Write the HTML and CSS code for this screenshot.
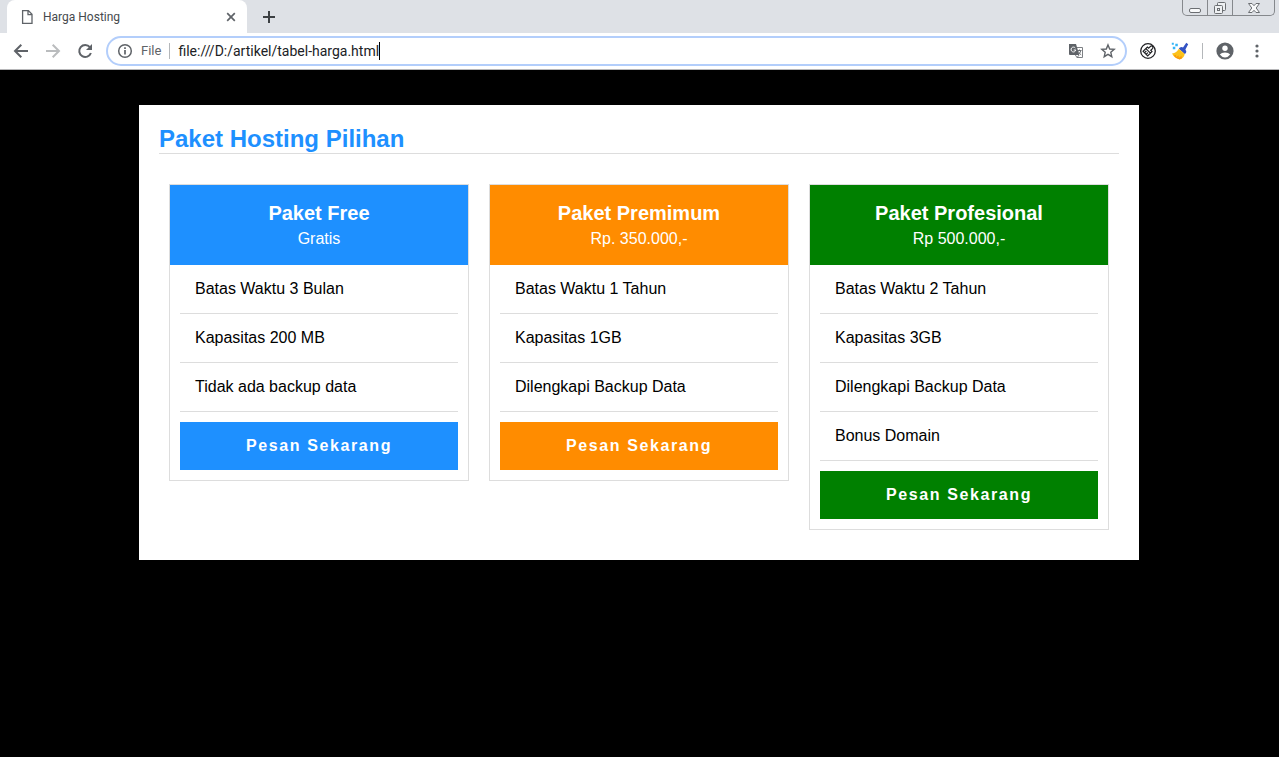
FILE: index.html
```html
<!DOCTYPE html>
<html lang="id">
<head>
<meta charset="utf-8">
<meta name="viewport" content="width=device-width, initial-scale=1">
<title>Harga Hosting</title>
<link rel="stylesheet" href="styles.css">
</head>
<body>
<header class="browser">
  <div class="tab-strip">
    <div class="tab">
      <svg class="tab-icon" width="16" height="16" viewBox="0 0 16 16" fill="none" stroke="#5f6368" stroke-width="1.3"><path d="M3.6 1.6H9.4L13 5.3V14.4H3.6ZM9 1.8V5.7H12.8"/></svg>
      <span class="tab-title">Harga Hosting</span>
      <button class="icon-button" type="button" aria-label="Close tab"><svg width="16" height="16" viewBox="0 0 16 16" stroke="#5f6368" stroke-width="1.7"><path d="M4.2 4.2 11.8 11.8M11.8 4.2 4.2 11.8"/></svg></button>
    </div>
    <button class="icon-button new-tab" type="button" aria-label="New tab"><svg width="16" height="16" viewBox="0 0 16 16" stroke="#3c4043" stroke-width="2"><path d="M8 2V14M2 8H14"/></svg></button>
    <div class="window-controls">
      <button class="window-button" type="button" aria-label="Minimize"><svg width="14" height="14" viewBox="0 0 14 14" fill="#f8f9fa" stroke="#6b6e72"><rect x="1.5" y="7.5" width="11" height="4" rx="1.5"/></svg></button>
      <button class="window-button" type="button" aria-label="Restore"><svg width="14" height="14" viewBox="0 0 14 14" fill="#eef0f2" stroke="#6b6e72"><rect x="4.5" y="1.5" width="8" height="8" rx="1"/><rect x="1.5" y="4.5" width="8" height="8" rx="1"/><rect x="4.5" y="7.5" width="2" height="2"/></svg></button>
      <button class="window-button window-close" type="button" aria-label="Close"><svg width="14" height="14" viewBox="0 0 14 14" fill="#f8f9fa" stroke="#6b6e72"><path d="M1.5 2.5H5L7 4.7 9 2.5H12.5L9.2 7 12.5 11.5H9L7 9.3 5 11.5H1.5L4.8 7Z"/></svg></button>
    </div>
  </div>
  <div class="toolbar">
    <nav class="nav-buttons">
      <button class="icon-button" type="button" aria-label="Back"><svg width="16" height="16" viewBox="0 0 16 16" fill="none" stroke="#5f6368" stroke-width="2"><path d="M15 8H2.5M8.3 1.7 2 8 8.3 14.3"/></svg></button>
      <button class="icon-button" type="button" aria-label="Forward"><svg width="16" height="16" viewBox="0 0 16 16" fill="none" stroke="#babcbe" stroke-width="2"><path d="M1 8H13.5M7.7 1.7 14 8 7.7 14.3"/></svg></button>
      <button class="icon-button" type="button" aria-label="Reload"><svg width="16" height="16" viewBox="0 0 16 16"><path d="M12.9 4.2A6 6 0 1 0 13.9 10" fill="none" stroke="#5f6368" stroke-width="2"/><path d="M15 1V7H9Z" fill="#5f6368"/></svg></button>
    </nav>
    <div class="omnibox">
      <svg width="16" height="16" viewBox="0 0 16 16" fill="none" stroke="#5f6368"><circle cx="8" cy="8" r="6.3" stroke-width="1.5"/><path d="M8 7V11.6M8 4.3V6" stroke-width="1.7"/></svg>
      <label class="scheme" for="address">File</label>
      <span class="scheme-divider"></span>
      <div class="address-field">
        <input class="address" id="address" type="text" value="file:///D:/artikel/tabel-harga.html" spellcheck="false">
        <span class="caret"></span>
      </div>
      <button class="icon-button" type="button" aria-label="Translate"><svg width="16" height="16" viewBox="0 0 16 16"><path d="M6 4.5H14.5V14.5H9L6 10Z" fill="#fff" stroke="#7d8084"/><path d="M1 1H8L11.3 12H2Q1 12 1 11Z" fill="#5f6368"/><path d="M7.3 5A2.4 2.4 0 1 0 7.8 7H5.7" fill="none" stroke="#fff"/><path d="M9.7 7.5H13.5M11.5 6.5V7.5M12.8 7.7Q12.3 10 10.5 11.2M10.4 8.5Q11.3 10.7 13.2 11.8M9 14.5 11.2 12" fill="none" stroke="#5f6368" stroke-width=".9"/></svg></button>
      <button class="icon-button" type="button" aria-label="Bookmark"><svg width="16" height="16" viewBox="0 0 16 16" fill="none" stroke="#5f6368" stroke-width="1.4"><path d="M8 1.9 9.7 6 14.2 6.4 10.8 9.3 11.8 13.7 8 11.3 4.2 13.7 5.2 9.3 1.8 6.4 6.3 6Z"/></svg></button>
    </div>
    <div class="extensions">
      <button class="icon-button clean-button" type="button" aria-label="Clean extension"><svg width="16" height="16" viewBox="0 0 16 16" fill="none" stroke="#202124" stroke-width="1.2"><circle cx="8" cy="8" r="7.3" stroke-width="1.3"/><path d="M8.7 5.2 10.6 3.3Q11.6 2.6 12.5 3.5T12.7 5.4L10.8 7.3 12 8.6 7.7 12.9 3.1 8.3 7.4 4ZM5.9 5.6 10.4 10.1M4.7 9.6 6.3 8M6.3 11.2 7.9 9.6"/></svg></button>
      <button class="icon-button" type="button" aria-label="Broom extension"><svg width="18" height="18" viewBox="0 0 18 18"><path d="M15.3.8 17.2 2.2 14.4 7.4Q15.9 9 15 11L13.7 12 7.8 6.8 8.8 5.6Q10.6 4.7 12 5.4Z" fill="#3453c4"/><path d="M7.8 6.8 13.7 12Q13 16.5 8.5 17.3 3.5 16.2 1 11.4 5.8 11 7.8 6.8Z" fill="#fcc21b"/><path d="M2.6 13.6 5.2 12.8 5 14.9 7.7 13.6 7.7 16 10.4 13.8 11 16.2Q9.8 17.3 8.5 17.5 4.8 16.5 2.6 13.6Z" fill="#fb9a0b"/><path d="M.8.8H2.8V2.8H.8ZM4.3 1.8H6.8V4.3H4.3ZM1.8 4.8H4.3V7.3H1.8Z" fill="#35b5f5"/></svg></button>
      <span class="toolbar-divider"></span>
      <button class="icon-button" type="button" aria-label="Profile"><svg width="18" height="18" viewBox="0 0 18 18"><circle cx="9" cy="9" r="8.6" fill="#5f6368"/><circle cx="9" cy="6.2" r="2.7" fill="#fff"/><path d="M3.8 12.6Q5.5 10.4 9 10.4T14.2 12.6Q12.2 15.4 9 15.4T3.8 12.6Z" fill="#fff"/></svg></button>
      <button class="icon-button menu-button" type="button" aria-label="Menu"><svg width="16" height="16" viewBox="0 0 16 16" fill="#5f6368"><circle cx="8" cy="3" r="1.6"/><circle cx="8" cy="8" r="1.6"/><circle cx="8" cy="13" r="1.6"/></svg></button>
    </div>
  </div>
</header>

<main class="page">
  <section class="container">
    <h1 class="heading">Paket Hosting Pilihan</h1>
    <div class="plans">
      <article class="plan plan-free">
        <header class="plan-header">
          <h2 class="plan-name">Paket Free</h2>
          <p class="plan-price">Gratis</p>
        </header>
        <div class="plan-body">
          <ul class="features">
            <li class="feature">Batas Waktu 3 Bulan</li>
            <li class="feature">Kapasitas 200 MB</li>
            <li class="feature">Tidak ada backup data</li>
          </ul>
          <a class="order" href="#">Pesan Sekarang</a>
        </div>
      </article>
      <article class="plan plan-premium">
        <header class="plan-header">
          <h2 class="plan-name">Paket Premimum</h2>
          <p class="plan-price">Rp. 350.000,-</p>
        </header>
        <div class="plan-body">
          <ul class="features">
            <li class="feature">Batas Waktu 1 Tahun</li>
            <li class="feature">Kapasitas 1GB</li>
            <li class="feature">Dilengkapi Backup Data</li>
          </ul>
          <a class="order" href="#">Pesan Sekarang</a>
        </div>
      </article>
      <article class="plan plan-professional">
        <header class="plan-header">
          <h2 class="plan-name">Paket Profesional</h2>
          <p class="plan-price">Rp 500.000,-</p>
        </header>
        <div class="plan-body">
          <ul class="features">
            <li class="feature">Batas Waktu 2 Tahun</li>
            <li class="feature">Kapasitas 3GB</li>
            <li class="feature">Dilengkapi Backup Data</li>
            <li class="feature">Bonus Domain</li>
          </ul>
          <a class="order" href="#">Pesan Sekarang</a>
        </div>
      </article>
    </div>
  </section>
</main>
</body>
</html>
```
FILE: styles.css
```css
* {
  box-sizing: border-box;
}

body {
  margin: 0;
  min-height: 100vh;
  display: flex;
  flex-direction: column;
  background: #000;
  color: #000;
  font: 16px/18px "Liberation Sans", Arial, sans-serif;
}

svg {
  display: block;
}

/* Browser window */

.browser {
  font-family: "Segoe UI", Roboto, sans-serif;
  font-size: 12px;
  border-bottom: 1px solid #b6b6b8;
  background: #fff;
}

.icon-button {
  display: flex;
  align-items: center;
  justify-content: center;
  padding: 0;
  border: 0;
  background: none;
}

.tab-strip {
  display: flex;
  align-items: center;
  height: 33px;
  padding-left: 7px;
  background: #dee1e6;
}

.tab {
  display: flex;
  align-items: center;
  align-self: stretch;
  gap: 8px;
  width: 240px;
  padding: 0 8px 0 12px;
  border-radius: 8px 8px 0 0;
  background: #fff;
}

.tab-title {
  flex: 1;
  color: #45494d;
}

.new-tab {
  margin-left: 14px;
}

.window-controls {
  display: flex;
  align-self: flex-start;
  margin: 0 4px 0 auto;
  border: 1px solid #85888c;
  border-top: 0;
  border-radius: 0 0 5px 5px;
}

.window-button {
  display: flex;
  align-items: center;
  justify-content: center;
  width: 25px;
  height: 15px;
  padding: 0;
  border: 0;
  border-right: 1px solid #85888c;
  background: none;
}

.window-close {
  width: 41px;
  border-right: 0;
}

.toolbar {
  display: flex;
  align-items: center;
  height: 36px;
  padding: 0 14px 0 13px;
}

.nav-buttons {
  display: flex;
  gap: 16px;
  margin-right: 13px;
}

.omnibox {
  flex: 1;
  display: flex;
  align-items: center;
  gap: 8px;
  height: 30px;
  padding: 0 9px;
  border: 2px solid #b3cefb;
  border-radius: 15px;
}

.omnibox .icon-button {
  margin-left: 8px;
}

.scheme {
  color: #5f6368;
  font-size: 13px;
}

.scheme-divider,
.toolbar-divider {
  width: 1px;
  height: 16px;
  background: #b4b7ba;
}

.address-field {
  flex: 1;
  display: flex;
  align-items: center;
}

.address {
  field-sizing: content;
  padding: 0;
  border: 0;
  outline: 0;
  background: none;
  color: #202124;
  font: 14px/18px "Segoe UI", Roboto, sans-serif;
}

.caret {
  width: 1px;
  height: 18px;
  background: #000;
}

.extensions {
  display: flex;
  align-items: center;
  gap: 13px;
  margin-left: 13px;
}

.clean-button {
  margin-right: 2px;
}

.menu-button {
  margin-left: 2px;
}

/* Pricing page */

.page {
  flex: 1;
  padding: 35px 21px 35px 20px;
}

.container {
  max-width: 1000px;
  margin: 0 auto;
  padding: 20px;
  background: #fff;
}

.heading {
  margin: 0 0 20px;
  border-bottom: 1px solid #ddd;
  color: #1e90ff;
  font-size: 24px;
  line-height: 28px;
}

.plans {
  display: grid;
  grid-template-columns: repeat(3, 1fr);
  align-items: start;
  gap: 20px;
  padding: 10px;
}

.plan {
  border: 1px solid #ddd;
}

.plan-free {
  --plan-color: #1e90ff;
}

.plan-premium {
  --plan-color: #ff8c00;
}

.plan-professional {
  --plan-color: #008000;
}

.plan-header {
  padding: 15px 10px 13px;
  background: var(--plan-color);
  color: #fff;
  line-height: 26px;
  text-align: center;
}

.plan-name {
  margin: 0;
  font-size: 20px;
}

.plan-price {
  margin: 0;
}

.plan-body {
  padding: 0 10px 10px;
}

.features {
  margin: 0 0 10px;
  padding: 0;
  list-style: none;
}

.feature {
  padding: 15px;
  border-bottom: 1px solid #ddd;
}

.order {
  display: block;
  padding: 15px;
  background: var(--plan-color);
  color: #fff;
  font-weight: bold;
  letter-spacing: 0.1em;
  text-align: center;
  text-decoration: none;
}
```
